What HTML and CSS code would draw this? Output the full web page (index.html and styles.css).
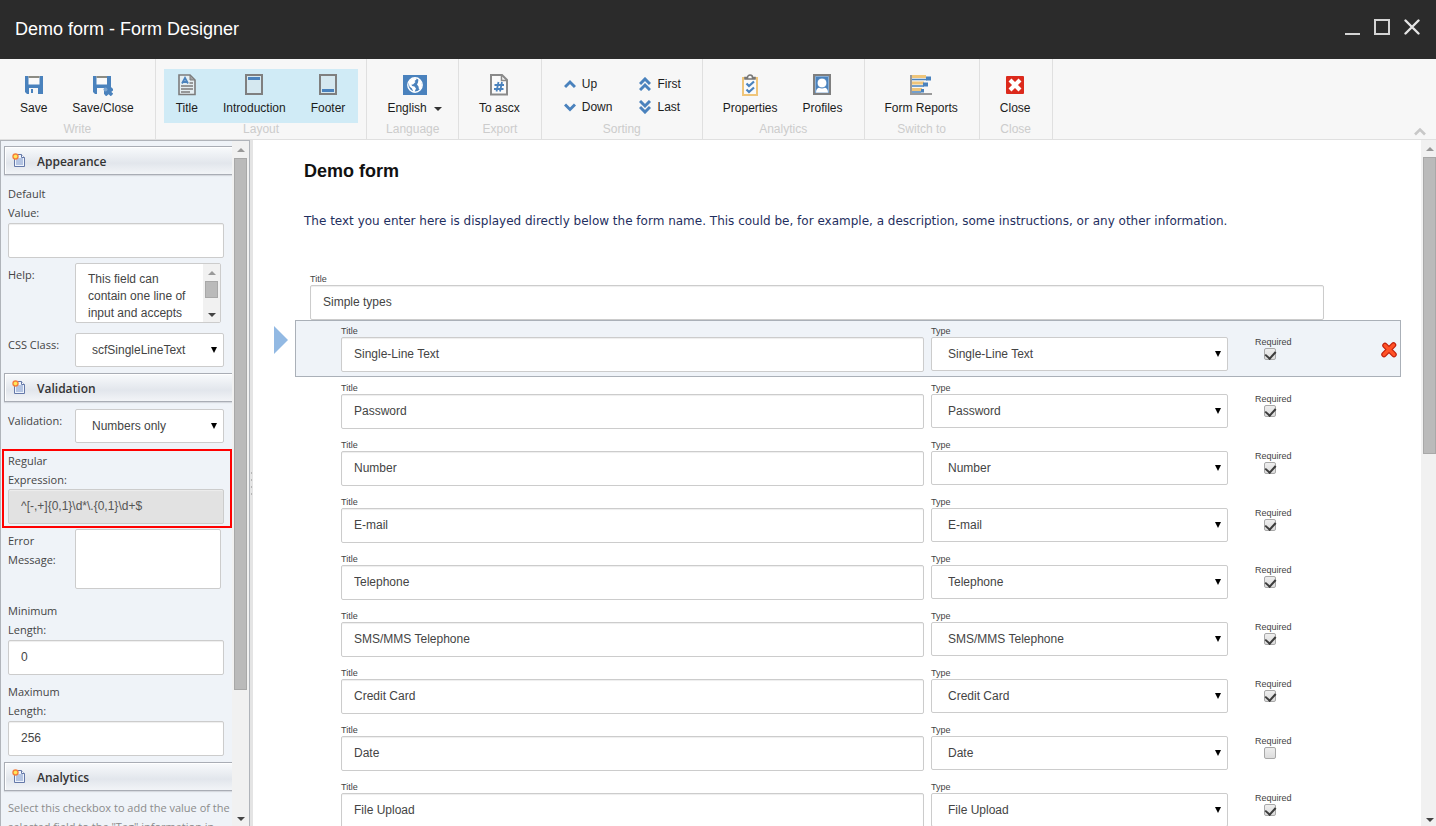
FILE: index.html
```html
<!DOCTYPE html>
<html lang="en">
<head>
<meta charset="utf-8">
<title>Demo form - Form Designer</title>
<link rel="stylesheet" href="styles.css">
</head>
<body>
<svg class="defs" width="0" height="0" aria-hidden="true">
  <symbol id="section-icon" viewBox="0 0 14 16">
    <path d="M2.500 2.500h7l3 3v9h-10z" fill="#eef3fb" stroke="#6478a8"/>
    <path d="M4 6h7v7H4z" fill="#b4c4e2"/>
    <path d="M9.500 2.500v3h3" fill="#fff" stroke="#6478a8"/>
    <circle cx="3.500" cy="4.500" r="3.200" fill="#f5803c"/>
    <circle cx="3.500" cy="4.500" r="1.800" fill="#ffe95a"/>
  </symbol>
</svg>

<header class="titlebar">
  <h1 class="titlebar-text">Demo form - Form Designer</h1>
  <div class="window-buttons">
    <button type="button" aria-label="Minimize"><svg width="16" height="16"><path d="M1 15h15" stroke="#d4d4d4" stroke-width="2"/></svg></button>
    <button type="button" aria-label="Maximize"><svg width="16" height="16"><path d="M1 1h14v14H1z" fill="none" stroke="#d4d4d4" stroke-width="2"/></svg></button>
    <button type="button" aria-label="Close window"><svg width="16" height="16"><path d="M1.500 1.500l13 13M14.500 1.500l-13 13" stroke="#e4e4e4" stroke-width="2.400" stroke-linecap="round"/></svg></button>
  </div>
</header>

<nav class="ribbon">
  <section class="group">
    <div class="tools">
      <button class="tool" type="button">
        <svg width="20" height="22"><path d="M1 2h18v18H3L1 18z" fill="#4a82bd"/><path d="M4.500 2h11v8.500h-11z" fill="#fafafa"/><path d="M4.500 2h11v2h-11z" fill="#8c8c84"/><path d="M5 14h9v6H5z" fill="#f7f7f7"/><path d="M7 15h2v4H7z" fill="#4a82bd"/></svg>
        <span>Save</span></button>
      <button class="tool" type="button">
        <svg width="20" height="22"><path d="M0 2h18v18H2L0 18z" fill="#4a82bd"/><path d="M3.500 2h10.500v8.500H3.500z" fill="#fafafa"/><path d="M3.500 2h10.500v2H3.500z" fill="#8c8c84"/><path d="M4 14h7v6H4z" fill="#f7f7f7"/><path d="M12 14.500l7 6.500M19.500 14.500L12 21" stroke="#4a82bd" stroke-width="3.500"/><circle cx="12.500" cy="15.500" r="2" fill="#7ba4d0"/></svg>
        <span>Save/Close</span></button>
    </div>
    <h2>Write</h2>
  </section>
  <section class="group">
    <div class="tools tools-active">
      <button class="tool" type="button">
        <svg width="20" height="22"><path d="M2 1h11l5 5v14.500H2z" fill="#e4eef2" stroke="#7c7c7c" stroke-width="1.600"/><path d="M13 1v5h5z" fill="#a0a0a0" stroke="#7c7c7c"/><path d="M5 9.500L8 4l3 5.500M6 8h4" fill="none" stroke="#4a82bd" stroke-width="1.800"/><path d="M12.500 9h3.500M4 12h12M4 15h12M4 18h9" stroke="#7c7c7c" stroke-width="1.300"/></svg>
        <span>Title</span></button>
      <button class="tool" type="button">
        <svg width="20" height="22"><path d="M2 1h16v19H2z" fill="#d5e8f0" stroke="#7f7f7f" stroke-width="2"/><path d="M4 3h12v3H4z" fill="#4a82bd"/></svg>
        <span>Introduction</span></button>
      <button class="tool" type="button">
        <svg width="20" height="22"><path d="M2 1h16v19H2z" fill="#d5e8f0" stroke="#7f7f7f" stroke-width="2"/><path d="M4 15h12v3H4z" fill="#4a82bd"/></svg>
        <span>Footer</span></button>
    </div>
    <h2>Layout</h2>
  </section>
  <section class="group">
    <div class="tools">
      <button class="tool tool-menu" type="button">
        <svg width="24" height="22"><path d="M0 1h24v20H0z" fill="#4a82bd"/><circle cx="12" cy="11" r="7.200" fill="#4a82bd" stroke="#fff" stroke-width="1.400"/><path d="M5.500 8.500C7 5.500 9.500 4 12.500 4l1 1.500-2 1.500 1 1-2.500 2.500-1.500 0 .5 1.500 2.500.5 1.500 2-1.500 3.500-1 .5-1.500-4-2.500-2zM15.500 5l2.500 2.500 1 3.500-1 4-2 .5-.5-3-1.500-2 1-2z" fill="#fff"/></svg>
        <span>English <i class="caret"></i></span></button>
    </div>
    <h2>Language</h2>
  </section>
  <section class="group">
    <div class="tools">
      <button class="tool" type="button">
        <svg width="20" height="22"><path d="M2 1h11l5 5v14.500H2z" fill="#fafafa" stroke="#8a8a8a" stroke-width="2"/><path d="M12.500 1v5.500H18" fill="none" stroke="#8a8a8a" stroke-width="1.500"/><path d="M9.500 8l-2 9.500M13 8l-2 9.500M5.500 11h9.500M5 15h9.500" stroke="#4a82bd" stroke-width="1.800"/></svg>
        <span>To ascx</span></button>
    </div>
    <h2>Export</h2>
  </section>
  <section class="group">
    <div class="sorts">
      <button class="sort" type="button"><svg width="12" height="14"><path d="M1 10l5-5 5 5" class="chevron"/></svg>Up</button>
      <button class="sort" type="button"><svg width="12" height="14"><path d="M1 7l5-5 5 5M1 13l5-5 5 5" class="chevron"/></svg>First</button>
      <button class="sort" type="button"><svg width="12" height="14"><path d="M1 4.500l5 5 5-5" class="chevron"/></svg>Down</button>
      <button class="sort" type="button"><svg width="12" height="14"><path d="M1 1l5 5 5-5M1 7l5 5 5-5" class="chevron"/></svg>Last</button>
    </div>
    <h2>Sorting</h2>
  </section>
  <section class="group">
    <div class="tools">
      <button class="tool" type="button">
        <svg width="20" height="22"><path d="M3 4h14v17H3z" fill="#fafafa" stroke="#efc57a" stroke-width="2"/><path d="M5 5V3.500h2.500a2.500 2.500 0 0 1 5 0H15V5z" fill="#f7f7f7" stroke="#777" stroke-width="1.500"/><path d="M6.500 9.500l2.500 2.500 5-4.500M6.500 15.500L9 18l5-4.500" fill="none" stroke="#4a82bd" stroke-width="2.200"/></svg>
        <span>Properties</span></button>
      <button class="tool" type="button">
        <svg width="20" height="22"><path d="M2 1h16v19H2z" fill="#4a82bd" stroke="#7f7f7f" stroke-width="2"/><path d="M3.500 2.500h13v16h-13z" fill="none" stroke="#86add6"/><path d="M4 18.500c0-3 1.500-4.500 3.500-5h5c2 .5 3.500 2 3.500 5z" fill="#fff"/><circle cx="10" cy="9" r="5" fill="#fff" stroke="#4a82bd"/></svg>
        <span>Profiles</span></button>
    </div>
    <h2>Analytics</h2>
  </section>
  <section class="group">
    <div class="tools">
      <button class="tool" type="button">
        <svg width="22" height="22"><path d="M1 1v19h21" fill="none" stroke="#9a9a9a" stroke-width="2"/><path d="M2 1h14v3H2zM2 7.500h12v3H2zM2 14h10v3H2z" fill="#efc57a"/><path d="M2 5.500h15M2 12h12M2 18h9" stroke="#4a82bd" stroke-width="1.600"/><path d="M16 2.500h5v4h-5zM13 8.500h5v4h-5zM11 15h3v3.500h-3z" fill="#4a82bd"/></svg>
        <span>Form Reports</span></button>
    </div>
    <h2>Switch to</h2>
  </section>
  <section class="group">
    <div class="tools">
      <button class="tool" type="button">
        <svg width="20" height="22"><rect x="1" y="2" width="18" height="18" rx="1" fill="#dc2a1c"/><path d="M5 6l10 10M15 6L5 16" stroke="#fff" stroke-width="4.200"/></svg>
        <span>Close</span></button>
    </div>
    <h2>Close</h2>
  </section>
  <button class="collapse" type="button" aria-label="Collapse ribbon"><svg width="14" height="10"><path d="M2 7.500l5-5 5 5" fill="none" stroke="#c8c8c8" stroke-width="2.600"/></svg></button>
</nav>

<div class="workspace">
  <aside class="sidebar">
    <div class="properties">
      <h2 class="section-head"><svg width="14" height="16"><use href="#section-icon"/></svg>Appearance</h2>
      <div class="section">
        <div class="stacked first"><label for="default-value">Default<br>Value:</label><input class="field" id="default-value" type="text"></div>
        <div class="inline"><label for="help">Help:</label>
          <div class="help-box"><textarea id="help">This field can contain one line of input and accepts</textarea>
            <div class="bar bar-small" aria-hidden="true"><i class="up"></i><i class="thumb"></i><i class="down"></i></div></div></div>
        <div class="inline spaced"><label for="css-class">CSS Class:</label>
          <div class="select"><select id="css-class"><option>scfSingleLineText</option></select></div></div>
      </div>
      <h2 class="section-head"><svg width="14" height="16"><use href="#section-icon"/></svg>Validation</h2>
      <div class="section">
        <div class="inline"><label for="validation">Validation:</label>
          <div class="select"><select id="validation"><option>Numbers only</option></select></div></div>
        <div class="stacked marked"><label for="regex">Regular<br>Expression:</label><input class="field" id="regex" type="text" value="^[-,+]{0,1}\d*\.{0,1}\d+$" disabled></div>
        <div class="inline"><label for="error">Error<br>Message:</label>
          <div class="help-box"><textarea id="error"></textarea></div></div>
        <div class="stacked min"><label for="min">Minimum<br>Length:</label><input class="field" id="min" type="text" value="0"></div>
        <div class="stacked"><label for="max">Maximum<br>Length:</label><input class="field" id="max" type="text" value="256"></div>
      </div>
      <h2 class="section-head"><svg width="14" height="16"><use href="#section-icon"/></svg>Analytics</h2>
      <p class="hint">Select this checkbox to add the value of the selected field to the "Tag" information in the</p>
    </div>
    <div class="bar bar-side" aria-hidden="true"><i class="up"></i><i class="thumb"></i><i class="down"></i></div>
  </aside>
  <div class="splitter"><i></i><i></i><i></i><i></i></div>

  <main class="canvas">
    <h2 class="form-name">Demo form</h2>
    <p class="intro">The text you enter here is displayed directly below the form name. This could be, for example, a description, some instructions, or any other information.</p>
    <div class="form-section"><label for="sec">Title</label><input class="field" id="sec" type="text" value="Simple types"></div>
    <div class="rows" id="rows"></div>
  </main>
  <div class="bar bar-main" aria-hidden="true"><i class="up"></i><i class="thumb"></i><i class="down"></i></div>
</div>
<script src="script.js"></script>
</body>
</html>
```
FILE: styles.css
```css
* { box-sizing: border-box; }
body {
  margin: 0;
  height: 100vh;
  display: flex;
  flex-direction: column;
  overflow: hidden;
  background: #fff;
  color: #444;
  font: 12px/14px "Liberation Sans", Arial, sans-serif;
}
button, input, select, textarea { font: inherit; color: inherit; margin: 0; }
button { border: 0; padding: 0; background: none; color: #1c1c1c; }
h1, h2, p { margin: 0; }
svg { display: block; flex: none; }
.defs { position: absolute; }

/* Title bar */
.titlebar {
  display: flex;
  flex: none;
  align-items: center;
  justify-content: space-between;
  padding: 19px 16px 20px 15px;
  background: #2b2b2b;
}
.titlebar-text { color: #fff; font-size: 18px; font-weight: 400; line-height: 20px; }
.window-buttons { display: flex; gap: 14px; margin-bottom: 4px; }

/* Ribbon */
.ribbon {
  display: flex;
  flex: none;
  position: relative;
  background: #f7f7f7;
  border-bottom: 1px solid #e0e0e0;
}
.group { padding: 10px 8px 3px; border-right: 1px solid #e0e0e0; }
.group h2 {
  color: #ccc;
  font-size: 12px;
  font-weight: 400;
  line-height: 13px;
  text-align: center;
}
.tools { display: flex; height: 54px; }
.tools-active { background: #d0ebf6; }
.tool {
  display: flex;
  flex-direction: column;
  align-items: center;
  gap: 5px;
  padding: 5px 13px 0 12px;
}
.tool-menu { padding-right: 8px; }
.caret, .up, .down, .select::after {
  display: inline-block;
  border: 4px solid transparent;
}
.caret { margin-left: 4px; border-top-color: #333; border-bottom: 0; vertical-align: 1px; }
.sorts {
  display: grid;
  grid-template-columns: auto auto;
  grid-auto-rows: 23px;
  height: 54px;
  padding-top: 3px;
}
.sort { display: flex; align-items: center; gap: 6px; padding: 0 13px 0 14px; }
.chevron { fill: none; stroke: #4a82bd; stroke-width: 3px; }
.collapse { position: absolute; right: 9px; bottom: 2px; }

/* Drawn scrollbars */
.bar { display: flex; flex: none; flex-direction: column; align-items: center; background: #f1f1f1; }
.bar .up { border-top: 0; border-bottom-color: #999; }
.bar .down { margin-top: auto; border-bottom: 0; border-top-color: #444; }
.bar .thumb { background: #bababa; border: 1px solid #a8a8a8; }
.bar-side { width: 17px; padding: 7px 2px 5px; }
.bar-side .thumb { width: 13px; height: 79%; margin-top: 6px; }
.bar-main { width: 15px; padding: 7px 0 4px 2px; }
.bar-main .thumb { width: 13px; height: 44%; margin-top: 6px; }
.bar-small { width: 17px; padding: 7px 0 5px; }
.bar-small .thumb { width: 13px; height: 17px; margin-top: 6px; }

/* Fields */
.field {
  display: block;
  width: 100%;
  height: 35px;
  padding: 0 12px 2px;
  background: #fff;
  border: 1px solid #ccc;
  border-radius: 2px;
  box-shadow: inset 0 1px 1px #eee;
}
.field:disabled { background: #e2e2e2; color: #555; }
.select { position: relative; }
.select select {
  display: block;
  width: 100%;
  height: 34px;
  padding: 0 24px 0 16px;
  appearance: none;
  background: #fff;
  border: 1px solid #ccc;
  border-radius: 2px;
}
.select::after {
  content: "";
  position: absolute;
  top: 14px;
  right: 7px;
  border-width: 6px 3px 0;
  border-top-color: #000;
}

/* Left panel */
.workspace { display: flex; flex: 1; min-height: 0; }
.sidebar {
  display: flex;
  flex: none;
  width: 250px;
  background: #eff3f8;
  border: 1px solid #b0b4ba;
  border-bottom: 0;
}
.properties { flex: 1; min-width: 0; overflow: hidden; padding-top: 5px; }
.section-head {
  display: flex;
  align-items: center;
  gap: 11px;
  height: 29px;
  margin-left: 3px;
  padding: 2px 0 0 7px;
  background: linear-gradient(#f8fafc, #e2e6ec 60%, #f2f4f7);
  border: 1px solid #a9adb5;
  border-right: 0;
  box-shadow: inset 1px 1px #fff, 0 1px 1px #d6d9df;
  color: #333;
  font: 600 12px/16px "Open Sans", sans-serif;
}
.section-head svg { margin-bottom: 4px; }
.section { padding: 7px 8px 6px 7px; }
.section label, .hint { font: 11px/19px "Open Sans", sans-serif; }
.section label { display: block; color: #444; }
.stacked { margin-top: 7px; }
.stacked label { padding-bottom: 1px; }
.stacked.first { margin-top: 2px; }
.inline { display: grid; grid-template-columns: 67px minmax(0, 1fr); }
.inline label { padding-top: 2px; }
.first + .inline { margin-top: 5px; }
.spaced { margin-top: 10px; }
.stacked.marked { margin: 6px -8px 1px -6px; padding: 0 6px 2px 4px; border: 2px solid #f00; }
.marked label { padding-bottom: 0; }
.stacked.min { margin-top: 12px; }
.help-box {
  display: flex;
  height: 60px;
  margin-right: 3px;
  background: #fff;
  border: 1px solid #ccc;
  border-radius: 2px;
}
.help-box textarea {
  flex: 1;
  min-width: 0;
  padding: 7px 8px 0 12px;
  border: 0;
  background: none;
  line-height: 17px;
  overflow: hidden;
  resize: none;
}
.hint { padding: 7px 0 0 7px; color: #8b8b8b; }
.splitter {
  display: flex;
  flex: none;
  flex-direction: column;
  align-items: center;
  justify-content: center;
  gap: 5px;
  width: 3px;
  background: #e4e4e4;
}
.splitter i { width: 1px; height: 2px; background: #b5b5b5; }

/* Form canvas */
.canvas { flex: 1; min-width: 0; overflow: hidden; padding: 21px 20px 0 42px; }
.form-name { margin-left: 9px; color: #111; font-size: 18px; line-height: 20px; }
.intro { margin: 32px 0 0 9px; color: #1f2f60; font: 12px/16px "DejaVu Sans", Verdana, sans-serif; }
.form-section { margin: 45px 77px 0 15px; }
.canvas label { display: block; font-size: 9px; line-height: 11px; }
.row {
  display: flex;
  position: relative;
  gap: 7px;
  padding: 5px 0 4px 45px;
  border: 1px solid transparent;
}
.row .title { flex: 583; }
.row .type { flex: 297; }
.row .title, .row .type { min-width: 0; }
.row .required { width: 165px; padding: 11px 0 0 20px; }
.row.selected { background: #eff3f8; border-color: #aab0b8; }
.row.selected::before {
  content: "";
  position: absolute;
  left: -22px;
  top: 5px;
  border: 14px solid transparent;
  border-left-color: #92b9e3;
  border-right: 0;
}
.required input {
  display: grid;
  place-items: center;
  width: 12px;
  height: 12px;
  margin: 0 0 0 9px;
  appearance: none;
  background: linear-gradient(#eee, #dcdcdc);
  border: 1px solid #a8a8a8;
  border-radius: 2px;
}
.required input:checked::before {
  content: "";
  width: 5px;
  height: 8px;
  margin-bottom: 2px;
  border: solid #3c3c3c;
  border-width: 0 2px 2px 0;
  transform: rotate(42deg);
}
.delete { position: absolute; right: 3px; top: 21px; }
```
FILE: script.js
```js
const fields = [
  ["Single-Line Text", true], ["Password", true], ["Number", true],
  ["E-mail", true], ["Telephone", true], ["SMS/MMS Telephone", true],
  ["Credit Card", true], ["Date", false], ["File Upload", true]
];

const deleteButton = `<button class="delete" type="button" aria-label="Delete field">
  <svg width="16" height="16"><path d="M4 3.500l9 9M12.500 3L3 12.500" stroke="#c01f0c" stroke-width="5.500" stroke-linecap="round"/>
  <path d="M4 3.500l9 9M12.500 3L3 12.500" stroke="#ff5126" stroke-width="3.200" stroke-linecap="round"/></svg></button>`;

document.getElementById("rows").innerHTML = fields.map(([name, required], i) => `
  <div class="row${i === 0 ? " selected" : ""}">
    <div class="title"><label for="title-${i}">Title</label><input class="field" type="text" id="title-${i}" value="${name}"></div>
    <div class="type"><label for="type-${i}">Type</label>
      <div class="select"><select id="type-${i}"><option>${name}</option></select></div></div>
    <div class="required"><label for="required-${i}">Required</label><input type="checkbox" id="required-${i}"${required ? " checked" : ""}></div>
    ${i === 0 ? deleteButton : ""}
  </div>`).join("");
```
